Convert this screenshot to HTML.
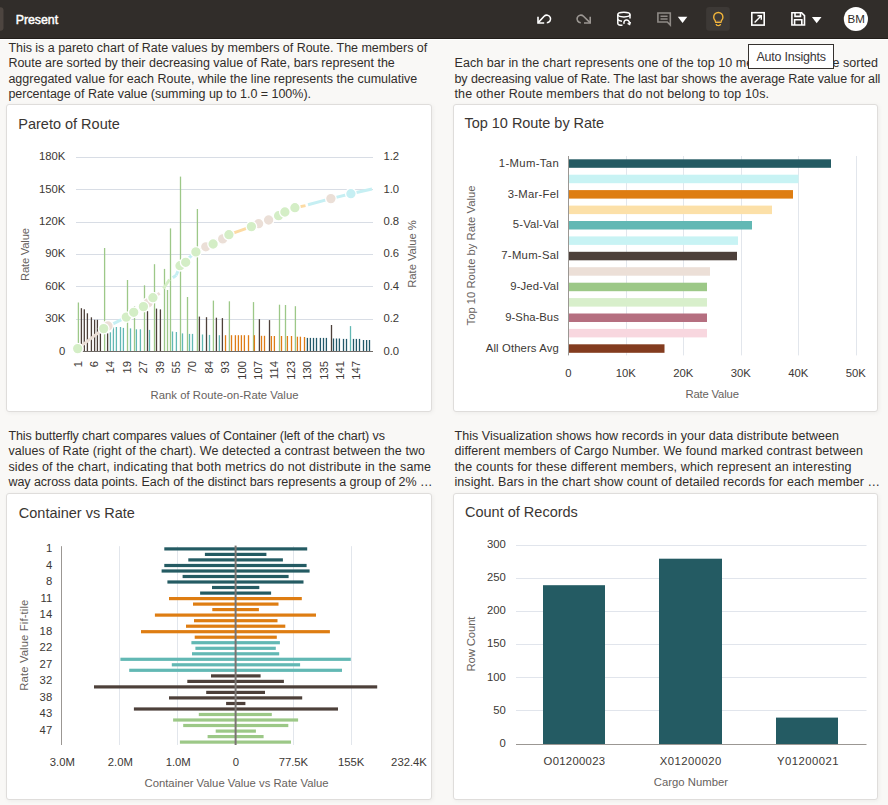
<!DOCTYPE html>
<html><head><meta charset="utf-8">
<style>
*{margin:0;padding:0;box-sizing:border-box}
html,body{width:888px;height:805px;overflow:hidden;background:#f9f8f6;font-family:"Liberation Sans", sans-serif;color:#312d2a}
#hdr{position:absolute;left:0;top:0;width:888px;height:39px;background:#312d2a;border-bottom:1px solid #221e1b}
#hl{position:absolute;left:0;top:39px;width:888px;height:1px;background:#fff}
#tab{position:absolute;left:-6px;top:6px;width:10px;height:26px;border-radius:4px;background:#4a4541}
.card{position:absolute;background:#fff;border:1px solid #dfdddb;border-radius:3px;box-shadow:1px 1px 4px rgba(0,0,0,0.05)}
svg{position:absolute;left:0;top:0}
svg text{font-family:"Liberation Sans", sans-serif}
#tip{position:absolute;left:748px;top:44px;width:86px;height:25px;background:#fff;border:1px solid #36322f}
</style></head><body>
<div id="hdr"></div><div id="hl"></div>
<svg width="888" height="805" viewBox="0 0 888 805"><text x="8.4" y="51.9" font-size="12.5" fill="#312d2a" text-anchor="start" textLength="418.8" lengthAdjust="spacing" >This is a pareto chart of Rate values by members of Route. The members of</text><text x="8.4" y="67.35" font-size="12.5" fill="#312d2a" text-anchor="start" textLength="386.4" lengthAdjust="spacing" >Route are sorted by their decreasing value of Rate, bars represent the</text><text x="8.4" y="82.8" font-size="12.5" fill="#312d2a" text-anchor="start" textLength="408.9" lengthAdjust="spacing" >aggregated value for each Route, while the line represents the cumulative</text><text x="8.4" y="98.25" font-size="12.5" fill="#312d2a" text-anchor="start" textLength="302.6" lengthAdjust="spacing" >percentage of Rate value (summing up to 1.0 = 100%).</text><text x="454.5" y="67.35" font-size="12.5" fill="#312d2a" text-anchor="start" textLength="423.4" lengthAdjust="spacing" >Each bar in the chart represents one of the top 10 members of Route sorted</text><text x="454.5" y="82.8" font-size="12.5" fill="#312d2a" text-anchor="start" textLength="425.9" lengthAdjust="spacing" >by decreasing value of Rate. The last bar shows the average Rate value for all</text><text x="454.5" y="98.25" font-size="12.5" fill="#312d2a" text-anchor="start" textLength="314.5" lengthAdjust="spacing" >the other Route members that do not belong to top 10s.</text><text x="8.4" y="439.7" font-size="12.5" fill="#312d2a" text-anchor="start" textLength="376.6" lengthAdjust="spacing" >This butterfly chart compares values of Container (left of the chart) vs</text><text x="8.4" y="455.15" font-size="12.5" fill="#312d2a" text-anchor="start" textLength="416.6" lengthAdjust="spacing" >values of Rate (right of the chart). We detected a contrast between the two</text><text x="8.4" y="470.6" font-size="12.5" fill="#312d2a" text-anchor="start" textLength="422.6" lengthAdjust="spacing" >sides of the chart, indicating that both metrics do not distribute in the same</text><text x="8.4" y="486.05" font-size="12.5" fill="#312d2a" text-anchor="start" textLength="424.1" lengthAdjust="spacing" >way across data points. Each of the distinct bars represents a group of 2% …</text><text x="454.5" y="439.7" font-size="12.5" fill="#312d2a" text-anchor="start" textLength="384.5" lengthAdjust="spacing" >This Visualization shows how records in your data distribute between</text><text x="454.5" y="455.15" font-size="12.5" fill="#312d2a" text-anchor="start" textLength="408.5" lengthAdjust="spacing" >different members of Cargo Number. We found marked contrast between</text><text x="454.5" y="470.6" font-size="12.5" fill="#312d2a" text-anchor="start" textLength="397.0" lengthAdjust="spacing" >the counts for these different members, which represent an interesting</text><text x="454.5" y="486.05" font-size="12.5" fill="#312d2a" text-anchor="start" textLength="425.5" lengthAdjust="spacing" >insight. Bars in the chart show count of detailed records for each member …</text></svg>
<div class="card" style="left:6px;top:104px;width:426px;height:308px"></div>
<div class="card" style="left:453px;top:104px;width:425px;height:308px"></div>
<div class="card" style="left:6px;top:493px;width:426px;height:307px"></div>
<div class="card" style="left:453px;top:493px;width:425px;height:307px"></div>
<svg width="888" height="805" viewBox="0 0 888 805"><text x="18.3" y="129" font-size="14.5" fill="#3a3633" text-anchor="start" textLength="101.5" lengthAdjust="spacing" >Pareto of Route</text><text x="464.6" y="127.9" font-size="14.5" fill="#3a3633" text-anchor="start" textLength="139.5" lengthAdjust="spacing" >Top 10 Route by Rate</text><text x="18.8" y="518" font-size="14.5" fill="#3a3633" text-anchor="start" >Container vs Rate</text><text x="465" y="517" font-size="14.5" fill="#3a3633" text-anchor="start" >Count of Records</text><text x="65.4" y="354.5" font-size="11.3" fill="#3c3835" text-anchor="end" >0</text><line x1="76" y1="319.5" x2="373" y2="319.5" stroke="#d8dde5" stroke-width="1"/><text x="65.4" y="322.1" font-size="11.3" fill="#3c3835" text-anchor="end" >30K</text><line x1="76" y1="286.5" x2="373" y2="286.5" stroke="#d8dde5" stroke-width="1"/><text x="65.4" y="289.7" font-size="11.3" fill="#3c3835" text-anchor="end" >60K</text><line x1="76" y1="254.5" x2="373" y2="254.5" stroke="#d8dde5" stroke-width="1"/><text x="65.4" y="257.3" font-size="11.3" fill="#3c3835" text-anchor="end" >90K</text><line x1="76" y1="222.5" x2="373" y2="222.5" stroke="#d8dde5" stroke-width="1"/><text x="65.4" y="224.90000000000003" font-size="11.3" fill="#3c3835" text-anchor="end" >120K</text><line x1="76" y1="189.5" x2="373" y2="189.5" stroke="#d8dde5" stroke-width="1"/><text x="65.4" y="192.50000000000003" font-size="11.3" fill="#3c3835" text-anchor="end" >150K</text><line x1="76" y1="157.5" x2="373" y2="157.5" stroke="#d8dde5" stroke-width="1"/><text x="65.4" y="160.10000000000005" font-size="11.3" fill="#3c3835" text-anchor="end" >180K</text><text x="383.4" y="354.5" font-size="11.3" fill="#3c3835" text-anchor="start" >0.0</text><text x="383.4" y="322.1" font-size="11.3" fill="#3c3835" text-anchor="start" >0.2</text><text x="383.4" y="289.7" font-size="11.3" fill="#3c3835" text-anchor="start" >0.4</text><text x="383.4" y="257.3" font-size="11.3" fill="#3c3835" text-anchor="start" >0.6</text><text x="383.4" y="224.90000000000003" font-size="11.3" fill="#3c3835" text-anchor="start" >0.8</text><text x="383.4" y="192.50000000000003" font-size="11.3" fill="#3c3835" text-anchor="start" >1.0</text><text x="383.4" y="160.10000000000005" font-size="11.3" fill="#3c3835" text-anchor="start" >1.2</text><rect x="77.75" y="302.5" width="1.3" height="48.8" fill="#9dc888"/><rect x="80.75" y="308.2" width="1.3" height="43.1" fill="#4d403a"/><rect x="83.65" y="309.3" width="1.3" height="42.0" fill="#4d403a"/><rect x="86.75" y="313.3" width="1.3" height="38.0" fill="#4d403a"/><rect x="90.75" y="317.3" width="1.3" height="34.0" fill="#4d403a"/><rect x="93.95" y="319.8" width="1.3" height="31.5" fill="#4d403a"/><rect x="96.75" y="319.8" width="1.3" height="31.5" fill="#4d403a"/><rect x="99.75" y="333.4" width="1.3" height="17.9" fill="#4d403a"/><rect x="103.95" y="248.0" width="1.3" height="103.3" fill="#9dc888"/><rect x="106.95" y="333.4" width="1.3" height="17.9" fill="#4d403a"/><rect x="109.75" y="332.3" width="1.3" height="19.0" fill="#62b8b4"/><rect x="112.75" y="327.0" width="1.3" height="24.3" fill="#62b8b4"/><rect x="115.75" y="327.0" width="1.3" height="24.3" fill="#62b8b4"/><rect x="119.85" y="327.0" width="1.3" height="24.3" fill="#62b8b4"/><rect x="122.75" y="327.9" width="1.3" height="23.4" fill="#62b8b4"/><rect x="126.85" y="280.0" width="1.3" height="71.3" fill="#9dc888"/><rect x="129.85" y="328.4" width="1.3" height="22.9" fill="#62b8b4"/><rect x="133.85" y="306.0" width="1.3" height="45.3" fill="#9dc888"/><rect x="135.75" y="329.3" width="1.3" height="22.0" fill="#62b8b4"/><rect x="139.75" y="329.3" width="1.3" height="22.0" fill="#62b8b4"/><rect x="143.85" y="285.3" width="1.3" height="66.0" fill="#9dc888"/><rect x="146.85" y="311.2" width="1.3" height="40.1" fill="#4d403a"/><rect x="148.85" y="329.9" width="1.3" height="21.4" fill="#62b8b4"/><rect x="153.85" y="264.2" width="1.3" height="87.1" fill="#9dc888"/><rect x="155.85" y="308.6" width="1.3" height="42.7" fill="#4d403a"/><rect x="159.75" y="309.4" width="1.3" height="41.9" fill="#4d403a"/><rect x="163.85" y="268.9" width="1.3" height="82.4" fill="#9dc888"/><rect x="166.85" y="290.0" width="1.3" height="61.3" fill="#9dc888"/><rect x="169.85" y="228.4" width="1.3" height="122.9" fill="#9dc888"/><rect x="171.85" y="331.5" width="1.3" height="19.8" fill="#62b8b4"/><rect x="175.75" y="332.0" width="1.3" height="19.3" fill="#62b8b4"/><rect x="179.85" y="176.6" width="1.3" height="174.7" fill="#9dc888"/><rect x="181.85" y="333.4" width="1.3" height="17.9" fill="#62b8b4"/><rect x="186.85" y="297.0" width="1.3" height="54.3" fill="#9dc888"/><rect x="188.85" y="333.9" width="1.3" height="17.4" fill="#62b8b4"/><rect x="191.85" y="333.9" width="1.3" height="17.4" fill="#62b8b4"/><rect x="196.75" y="209.0" width="1.3" height="142.3" fill="#9dc888"/><rect x="198.75" y="316.6" width="1.3" height="34.7" fill="#4d403a"/><rect x="201.85" y="334.5" width="1.3" height="16.8" fill="#62b8b4"/><rect x="205.85" y="317.2" width="1.3" height="34.1" fill="#4d403a"/><rect x="208.85" y="334.9" width="1.3" height="16.4" fill="#62b8b4"/><rect x="212.75" y="300.6" width="1.3" height="50.7" fill="#9dc888"/><rect x="215.75" y="317.7" width="1.3" height="33.6" fill="#4d403a"/><rect x="218.75" y="335.2" width="1.3" height="16.1" fill="#62b8b4"/><rect x="221.75" y="318.1" width="1.3" height="33.2" fill="#4d403a"/><rect x="224.85" y="335.2" width="1.3" height="16.1" fill="#df7c16"/><rect x="228.75" y="301.3" width="1.3" height="50.0" fill="#9dc888"/><rect x="230.85" y="335.2" width="1.3" height="16.1" fill="#df7c16"/><rect x="234.75" y="335.2" width="1.3" height="16.1" fill="#df7c16"/><rect x="237.75" y="335.2" width="1.3" height="16.1" fill="#df7c16"/><rect x="240.75" y="335.2" width="1.3" height="16.1" fill="#df7c16"/><rect x="243.75" y="335.2" width="1.3" height="16.1" fill="#df7c16"/><rect x="247.85" y="335.2" width="1.3" height="16.1" fill="#df7c16"/><rect x="252.85" y="302.1" width="1.3" height="49.2" fill="#9dc888"/><rect x="253.75" y="335.2" width="1.3" height="16.1" fill="#df7c16"/><rect x="258.75" y="319.2" width="1.3" height="32.1" fill="#4d403a"/><rect x="260.85" y="335.8" width="1.3" height="15.5" fill="#df7c16"/><rect x="263.85" y="335.8" width="1.3" height="15.5" fill="#df7c16"/><rect x="268.85" y="320.1" width="1.3" height="31.2" fill="#4d403a"/><rect x="270.75" y="336.0" width="1.3" height="15.3" fill="#df7c16"/><rect x="273.75" y="336.0" width="1.3" height="15.3" fill="#df7c16"/><rect x="278.85" y="304.7" width="1.3" height="46.6" fill="#9dc888"/><rect x="280.85" y="336.0" width="1.3" height="15.3" fill="#df7c16"/><rect x="284.85" y="305.0" width="1.3" height="46.3" fill="#9dc888"/><rect x="286.75" y="336.0" width="1.3" height="15.3" fill="#df7c16"/><rect x="290.85" y="336.0" width="1.3" height="15.3" fill="#df7c16"/><rect x="294.75" y="306.2" width="1.3" height="45.1" fill="#9dc888"/><rect x="296.75" y="336.7" width="1.3" height="14.6" fill="#df7c16"/><rect x="299.75" y="336.7" width="1.3" height="14.6" fill="#df7c16"/><rect x="303.85" y="337.0" width="1.3" height="14.3" fill="#df7c16"/><rect x="306.75" y="337.9" width="1.3" height="13.4" fill="#23596a"/><rect x="309.75" y="337.9" width="1.3" height="13.4" fill="#23596a"/><rect x="312.85" y="337.9" width="1.3" height="13.4" fill="#23596a"/><rect x="315.85" y="337.9" width="1.3" height="13.4" fill="#23596a"/><rect x="319.75" y="337.9" width="1.3" height="13.4" fill="#23596a"/><rect x="322.85" y="337.9" width="1.3" height="13.4" fill="#23596a"/><rect x="325.75" y="337.9" width="1.3" height="13.4" fill="#23596a"/><rect x="330.85" y="325.0" width="1.3" height="26.3" fill="#4d403a"/><rect x="332.85" y="338.5" width="1.3" height="12.8" fill="#23596a"/><rect x="335.85" y="338.5" width="1.3" height="12.8" fill="#23596a"/><rect x="338.75" y="338.5" width="1.3" height="12.8" fill="#23596a"/><rect x="342.85" y="338.9" width="1.3" height="12.4" fill="#23596a"/><rect x="345.85" y="338.9" width="1.3" height="12.4" fill="#23596a"/><rect x="349.85" y="326.1" width="1.3" height="25.2" fill="#62b8b4"/><rect x="352.85" y="338.9" width="1.3" height="12.4" fill="#23596a"/><rect x="355.75" y="338.9" width="1.3" height="12.4" fill="#23596a"/><rect x="358.85" y="338.9" width="1.3" height="12.4" fill="#23596a"/><rect x="362.85" y="340.0" width="1.3" height="11.3" fill="#23596a"/><rect x="365.95" y="340.0" width="1.3" height="11.3" fill="#23596a"/><rect x="368.85" y="340.0" width="1.3" height="11.3" fill="#23596a"/><line x1="76" y1="351.5" x2="373" y2="351.5" stroke="#6f6a66" stroke-width="1.1"/><line x1="77.7" y1="348.6" x2="103.7" y2="328.6" stroke="#ebdfd7" stroke-width="3"/><line x1="103.7" y1="328.6" x2="126.3" y2="317.1" stroke="#c6eff3" stroke-width="3"/><line x1="126.3" y1="317.1" x2="143.4" y2="306.6" stroke="#c6eff3" stroke-width="3"/><line x1="143.4" y1="306.6" x2="152.9" y2="297.7" stroke="#ebdfd7" stroke-width="3"/><line x1="152.9" y1="297.7" x2="159.6" y2="293.2" stroke="#ebdfd7" stroke-width="3"/><line x1="163.5" y1="288.5" x2="169.5" y2="279.5" stroke="#d4eec6" stroke-width="3"/><line x1="172.8" y1="277.8" x2="176.2" y2="275.3" stroke="#c6eff3" stroke-width="3"/><line x1="176.2" y1="275.3" x2="180" y2="265.7" stroke="#c6eff3" stroke-width="3"/><line x1="180" y1="265.7" x2="195.9" y2="251.9" stroke="#c6eff3" stroke-width="3"/><line x1="195.9" y1="251.9" x2="228.9" y2="234.7" stroke="#ebdfd7" stroke-width="3"/><line x1="228.9" y1="234.7" x2="251.4" y2="226.6" stroke="#fcdba4" stroke-width="3"/><line x1="251.4" y1="226.6" x2="268.6" y2="220" stroke="#ebdfd7" stroke-width="3"/><line x1="268.6" y1="220" x2="294.9" y2="207.7" stroke="#d4eec6" stroke-width="3"/><line x1="294.9" y1="207.7" x2="305.5" y2="205.6" stroke="#fcdba4" stroke-width="3"/><line x1="308" y1="204.8" x2="330.9" y2="198.6" stroke="#c6eff3" stroke-width="3"/><line x1="330.9" y1="198.6" x2="350.9" y2="193.7" stroke="#c6eff3" stroke-width="3"/><line x1="350.9" y1="193.7" x2="372" y2="189" stroke="#c6eff3" stroke-width="3"/><circle cx="108" cy="326" r="5.3" fill="#ebdfd7" stroke="#fff" stroke-width="1.3"/><circle cx="148" cy="303" r="5.3" fill="#ebdfd7" stroke="#fff" stroke-width="1.3"/><circle cx="205.8" cy="246.8" r="5.3" fill="#ebdfd7" stroke="#fff" stroke-width="1.3"/><circle cx="222.7" cy="238.9" r="5.3" fill="#ebdfd7" stroke="#fff" stroke-width="1.3"/><circle cx="258.6" cy="223.7" r="5.3" fill="#ebdfd7" stroke="#fff" stroke-width="1.3"/><circle cx="268.6" cy="220" r="5.3" fill="#ebdfd7" stroke="#fff" stroke-width="1.3"/><circle cx="330.9" cy="198.6" r="5.3" fill="#ebdfd7" stroke="#fff" stroke-width="1.3"/><circle cx="77.7" cy="348.6" r="5.3" fill="#d4eec6" stroke="#fff" stroke-width="1.3"/><circle cx="103.7" cy="328.6" r="5.3" fill="#d4eec6" stroke="#fff" stroke-width="1.3"/><circle cx="126.3" cy="317.1" r="5.3" fill="#d4eec6" stroke="#fff" stroke-width="1.3"/><circle cx="133.7" cy="312.3" r="5.3" fill="#d4eec6" stroke="#fff" stroke-width="1.3"/><circle cx="143.4" cy="306.6" r="5.3" fill="#d4eec6" stroke="#fff" stroke-width="1.3"/><circle cx="152.9" cy="297.7" r="5.3" fill="#d4eec6" stroke="#fff" stroke-width="1.3"/><circle cx="180" cy="265.7" r="5.3" fill="#d4eec6" stroke="#fff" stroke-width="1.3"/><circle cx="185.7" cy="262.3" r="5.3" fill="#d4eec6" stroke="#fff" stroke-width="1.3"/><circle cx="195.9" cy="251.9" r="5.3" fill="#d4eec6" stroke="#fff" stroke-width="1.3"/><circle cx="213.1" cy="244" r="5.3" fill="#d4eec6" stroke="#fff" stroke-width="1.3"/><circle cx="228.9" cy="234.7" r="5.3" fill="#d4eec6" stroke="#fff" stroke-width="1.3"/><circle cx="251.4" cy="226.6" r="5.3" fill="#d4eec6" stroke="#fff" stroke-width="1.3"/><circle cx="278.6" cy="215.7" r="5.3" fill="#d4eec6" stroke="#fff" stroke-width="1.3"/><circle cx="284.9" cy="212" r="5.3" fill="#d4eec6" stroke="#fff" stroke-width="1.3"/><circle cx="294.9" cy="207.7" r="5.3" fill="#d4eec6" stroke="#fff" stroke-width="1.3"/><circle cx="350.9" cy="193.7" r="5.3" fill="#c6eff3" stroke="#fff" stroke-width="1.3"/><text transform="translate(81.5,361) rotate(-90)" x="0" y="0" font-size="11.3" fill="#3c3835" text-anchor="end">1</text><text transform="translate(97.9,361) rotate(-90)" x="0" y="0" font-size="11.3" fill="#3c3835" text-anchor="end">6</text><text transform="translate(114.3,361) rotate(-90)" x="0" y="0" font-size="11.3" fill="#3c3835" text-anchor="end">14</text><text transform="translate(130.7,361) rotate(-90)" x="0" y="0" font-size="11.3" fill="#3c3835" text-anchor="end">19</text><text transform="translate(147.1,361) rotate(-90)" x="0" y="0" font-size="11.3" fill="#3c3835" text-anchor="end">27</text><text transform="translate(163.5,361) rotate(-90)" x="0" y="0" font-size="11.3" fill="#3c3835" text-anchor="end">39</text><text transform="translate(179.9,361) rotate(-90)" x="0" y="0" font-size="11.3" fill="#3c3835" text-anchor="end">55</text><text transform="translate(196.3,361) rotate(-90)" x="0" y="0" font-size="11.3" fill="#3c3835" text-anchor="end">70</text><text transform="translate(212.7,361) rotate(-90)" x="0" y="0" font-size="11.3" fill="#3c3835" text-anchor="end">84</text><text transform="translate(229.1,361) rotate(-90)" x="0" y="0" font-size="11.3" fill="#3c3835" text-anchor="end">93</text><text transform="translate(245.5,361) rotate(-90)" x="0" y="0" font-size="11.3" fill="#3c3835" text-anchor="end">100</text><text transform="translate(261.9,361) rotate(-90)" x="0" y="0" font-size="11.3" fill="#3c3835" text-anchor="end">107</text><text transform="translate(278.3,361) rotate(-90)" x="0" y="0" font-size="11.3" fill="#3c3835" text-anchor="end">114</text><text transform="translate(294.7,361) rotate(-90)" x="0" y="0" font-size="11.3" fill="#3c3835" text-anchor="end">123</text><text transform="translate(311.1,361) rotate(-90)" x="0" y="0" font-size="11.3" fill="#3c3835" text-anchor="end">130</text><text transform="translate(327.5,361) rotate(-90)" x="0" y="0" font-size="11.3" fill="#3c3835" text-anchor="end">135</text><text transform="translate(343.9,361) rotate(-90)" x="0" y="0" font-size="11.3" fill="#3c3835" text-anchor="end">141</text><text transform="translate(360.3,361) rotate(-90)" x="0" y="0" font-size="11.3" fill="#3c3835" text-anchor="end">147</text><text x="224.5" y="399" font-size="11.3" fill="#67625e" text-anchor="middle" textLength="148" lengthAdjust="spacing" >Rank of Route-on-Rate Value</text><text transform="translate(28.6,254.5) rotate(-90)" x="0" y="0" font-size="11.3" fill="#67625e" text-anchor="middle" textLength="53" lengthAdjust="spacing">Rate Value</text><text transform="translate(415.5,254) rotate(-90)" x="0" y="0" font-size="11.3" fill="#67625e" text-anchor="middle" textLength="67.5" lengthAdjust="spacing">Rate Value %</text><line x1="626.5" y1="156" x2="626.5" y2="355.4" stroke="#e2e6ec" stroke-width="1"/><line x1="683.5" y1="156" x2="683.5" y2="355.4" stroke="#e2e6ec" stroke-width="1"/><line x1="741.5" y1="156" x2="741.5" y2="355.4" stroke="#e2e6ec" stroke-width="1"/><line x1="798.5" y1="156" x2="798.5" y2="355.4" stroke="#e2e6ec" stroke-width="1"/><line x1="856.5" y1="156" x2="856.5" y2="355.4" stroke="#e2e6ec" stroke-width="1"/><text x="568.4" y="377" font-size="11.3" fill="#3c3835" text-anchor="middle" >0</text><text x="625.86" y="377" font-size="11.3" fill="#3c3835" text-anchor="middle" >10K</text><text x="683.3199999999999" y="377" font-size="11.3" fill="#3c3835" text-anchor="middle" >20K</text><text x="740.78" y="377" font-size="11.3" fill="#3c3835" text-anchor="middle" >30K</text><text x="798.24" y="377" font-size="11.3" fill="#3c3835" text-anchor="middle" >40K</text><text x="855.7" y="377" font-size="11.3" fill="#3c3835" text-anchor="middle" >50K</text><rect x="568.4" y="159.3" width="262.6" height="8.5" fill="#245b63"/><rect x="568.4" y="174.7" width="230.1" height="8.5" fill="#c8f3f4"/><rect x="568.4" y="190.1" width="224.6" height="8.5" fill="#de7d12"/><rect x="568.4" y="205.6" width="203.6" height="8.5" fill="#fce0a8"/><rect x="568.4" y="221.0" width="183.6" height="8.5" fill="#62b8b4"/><rect x="568.4" y="236.4" width="169.6" height="8.5" fill="#c8f3f4"/><rect x="568.4" y="251.8" width="168.6" height="8.5" fill="#4d403a"/><rect x="568.4" y="267.2" width="141.6" height="8.5" fill="#ecdfd7"/><rect x="568.4" y="282.7" width="138.6" height="8.5" fill="#9cc887"/><rect x="568.4" y="298.1" width="138.6" height="8.5" fill="#d8efcb"/><rect x="568.4" y="313.5" width="138.6" height="8.5" fill="#b56f80"/><rect x="568.4" y="328.9" width="138.6" height="8.5" fill="#f8d7df"/><rect x="568.4" y="344.3" width="96.1" height="8.5" fill="#833c1f"/><line x1="568.5" y1="156" x2="568.5" y2="355.4" stroke="#9b9793" stroke-width="1"/><text x="558.8" y="166.75" font-size="11.3" fill="#3c3835" text-anchor="end" textLength="60" lengthAdjust="spacing" >1-Mum-Tan</text><text x="558.8" y="197.59" font-size="11.3" fill="#3c3835" text-anchor="end" textLength="51" lengthAdjust="spacing" >3-Mar-Fel</text><text x="558.8" y="228.43" font-size="11.3" fill="#3c3835" text-anchor="end" textLength="46" lengthAdjust="spacing" >5-Val-Val</text><text x="558.8" y="259.27" font-size="11.3" fill="#3c3835" text-anchor="end" textLength="57.5" lengthAdjust="spacing" >7-Mum-Sal</text><text x="558.8" y="290.11" font-size="11.3" fill="#3c3835" text-anchor="end" textLength="48.5" lengthAdjust="spacing" >9-Jed-Val</text><text x="558.8" y="320.95" font-size="11.3" fill="#3c3835" text-anchor="end" textLength="53.5" lengthAdjust="spacing" >9-Sha-Bus</text><text x="558.8" y="351.79" font-size="11.3" fill="#3c3835" text-anchor="end" textLength="73" lengthAdjust="spacing" >All Others Avg</text><text x="712.2" y="397.5" font-size="11.3" fill="#67625e" text-anchor="middle" textLength="53.5" lengthAdjust="spacing" >Rate Value</text><text transform="translate(474.7,255.5) rotate(-90)" x="0" y="0" font-size="11.3" fill="#67625e" text-anchor="middle" textLength="140" lengthAdjust="spacing">Top 10 Route by Rate Value</text><line x1="119.5" y1="546.2" x2="119.5" y2="745" stroke="#e2e6ec" stroke-width="1"/><line x1="177.5" y1="546.2" x2="177.5" y2="745" stroke="#e2e6ec" stroke-width="1"/><line x1="293.5" y1="546.2" x2="293.5" y2="745" stroke="#e2e6ec" stroke-width="1"/><line x1="351.5" y1="546.2" x2="351.5" y2="745" stroke="#e2e6ec" stroke-width="1"/><line x1="61.5" y1="546.2" x2="61.5" y2="745" stroke="#9b9793" stroke-width="1"/><rect x="164.3" y="547.3" width="142.9" height="3.2" fill="#245b63"/><rect x="204.9" y="552.8" width="61.5" height="3.2" fill="#245b63"/><rect x="188.3" y="558.3" width="94.6" height="3.2" fill="#245b63"/><rect x="164.3" y="563.9" width="142.3" height="3.2" fill="#245b63"/><rect x="161.6" y="569.4" width="148.0" height="3.2" fill="#245b63"/><rect x="182.6" y="574.9" width="106.0" height="3.2" fill="#245b63"/><rect x="167.4" y="580.4" width="136.1" height="3.2" fill="#245b63"/><rect x="212.0" y="585.9" width="47.3" height="3.2" fill="#245b63"/><rect x="200.1" y="591.5" width="71.0" height="3.2" fill="#245b63"/><rect x="169.0" y="597.0" width="132.8" height="3.2" fill="#de7d12"/><rect x="193.0" y="602.5" width="85.5" height="3.2" fill="#de7d12"/><rect x="212.3" y="608.0" width="46.6" height="3.2" fill="#de7d12"/><rect x="154.9" y="613.5" width="161.1" height="3.2" fill="#de7d12"/><rect x="194.0" y="619.1" width="83.5" height="3.2" fill="#de7d12"/><rect x="186.0" y="624.6" width="99.3" height="3.2" fill="#de7d12"/><rect x="141.0" y="630.1" width="188.9" height="3.2" fill="#de7d12"/><rect x="194.7" y="635.6" width="82.1" height="3.2" fill="#de7d12"/><rect x="191.4" y="641.1" width="88.5" height="3.2" fill="#62b8b4"/><rect x="195.4" y="646.7" width="80.4" height="3.2" fill="#62b8b4"/><rect x="192.0" y="652.2" width="87.2" height="3.2" fill="#62b8b4"/><rect x="120.4" y="657.7" width="230.4" height="3.2" fill="#62b8b4"/><rect x="171.8" y="663.2" width="128.3" height="3.2" fill="#62b8b4"/><rect x="129.2" y="668.7" width="212.8" height="3.2" fill="#62b8b4"/><rect x="211.0" y="674.3" width="49.6" height="3.2" fill="#4d403a"/><rect x="187.3" y="679.8" width="96.6" height="3.2" fill="#4d403a"/><rect x="94.0" y="685.3" width="283.2" height="3.2" fill="#4d403a"/><rect x="206.2" y="690.8" width="58.8" height="3.2" fill="#4d403a"/><rect x="169.0" y="696.3" width="133.2" height="3.2" fill="#4d403a"/><rect x="226.1" y="701.9" width="19.3" height="3.2" fill="#4d403a"/><rect x="133.9" y="707.4" width="204.1" height="3.2" fill="#4d403a"/><rect x="198.8" y="712.9" width="73.0" height="3.2" fill="#9cc887"/><rect x="173.1" y="718.4" width="125.0" height="3.2" fill="#9cc887"/><rect x="183.2" y="723.9" width="105.1" height="3.2" fill="#9cc887"/><rect x="215.7" y="729.5" width="40.2" height="3.2" fill="#9cc887"/><rect x="207.6" y="735.0" width="56.0" height="3.2" fill="#9cc887"/><rect x="179.9" y="740.5" width="111.1" height="3.2" fill="#9cc887"/><line x1="235.6" y1="545.6" x2="235.6" y2="745" stroke="#7a7572" stroke-width="2"/><text x="52.2" y="552.0" font-size="11.3" fill="#3c3835" text-anchor="end" >1</text><text x="52.2" y="568.5" font-size="11.3" fill="#3c3835" text-anchor="end" >4</text><text x="52.2" y="585.0" font-size="11.3" fill="#3c3835" text-anchor="end" >8</text><text x="52.2" y="601.5" font-size="11.3" fill="#3c3835" text-anchor="end" >11</text><text x="52.2" y="618.0" font-size="11.3" fill="#3c3835" text-anchor="end" >14</text><text x="52.2" y="634.5" font-size="11.3" fill="#3c3835" text-anchor="end" >18</text><text x="52.2" y="651.0" font-size="11.3" fill="#3c3835" text-anchor="end" >22</text><text x="52.2" y="667.5" font-size="11.3" fill="#3c3835" text-anchor="end" >27</text><text x="52.2" y="684.0" font-size="11.3" fill="#3c3835" text-anchor="end" >32</text><text x="52.2" y="700.5" font-size="11.3" fill="#3c3835" text-anchor="end" >38</text><text x="52.2" y="717.0" font-size="11.3" fill="#3c3835" text-anchor="end" >43</text><text x="52.2" y="733.5" font-size="11.3" fill="#3c3835" text-anchor="end" >47</text><text x="62.4" y="766" font-size="11.3" fill="#3c3835" text-anchor="middle" >3.0M</text><text x="120.3" y="766" font-size="11.3" fill="#3c3835" text-anchor="middle" >2.0M</text><text x="178.2" y="766" font-size="11.3" fill="#3c3835" text-anchor="middle" >1.0M</text><text x="236" y="766" font-size="11.3" fill="#3c3835" text-anchor="middle" >0</text><text x="293.4" y="766" font-size="11.3" fill="#3c3835" text-anchor="middle" >77.5K</text><text x="351.1" y="766" font-size="11.3" fill="#3c3835" text-anchor="middle" >155K</text><text x="409" y="766" font-size="11.3" fill="#3c3835" text-anchor="middle" >232.4K</text><text x="236.5" y="786.6" font-size="11.3" fill="#67625e" text-anchor="middle" >Container Value Value vs Rate Value</text><text transform="translate(28.1,645.2) rotate(-90)" x="0" y="0" font-size="11.3" fill="#67625e" text-anchor="middle" textLength="91" lengthAdjust="spacing">Rate Value Fif-tile</text><line x1="516" y1="710.5" x2="866.5" y2="710.5" stroke="#e1e5ec" stroke-width="1"/><line x1="516" y1="677.5" x2="866.5" y2="677.5" stroke="#e1e5ec" stroke-width="1"/><line x1="516" y1="644.5" x2="866.5" y2="644.5" stroke="#e1e5ec" stroke-width="1"/><line x1="516" y1="611.5" x2="866.5" y2="611.5" stroke="#e1e5ec" stroke-width="1"/><line x1="516" y1="578.5" x2="866.5" y2="578.5" stroke="#e1e5ec" stroke-width="1"/><line x1="516" y1="545.5" x2="866.5" y2="545.5" stroke="#e1e5ec" stroke-width="1"/><text x="505.8" y="746.7" font-size="11.3" fill="#3c3835" text-anchor="end" >0</text><text x="505.8" y="713.6" font-size="11.3" fill="#3c3835" text-anchor="end" >50</text><text x="505.8" y="680.5" font-size="11.3" fill="#3c3835" text-anchor="end" >100</text><text x="505.8" y="647.4" font-size="11.3" fill="#3c3835" text-anchor="end" >150</text><text x="505.8" y="614.3000000000001" font-size="11.3" fill="#3c3835" text-anchor="end" >200</text><text x="505.8" y="581.2" font-size="11.3" fill="#3c3835" text-anchor="end" >250</text><text x="505.8" y="548.1" font-size="11.3" fill="#3c3835" text-anchor="end" >300</text><rect x="543" y="585.2" width="62" height="158.9" fill="#245b63"/><rect x="659" y="558.7" width="63" height="185.4" fill="#245b63"/><rect x="776" y="717.6" width="62" height="26.5" fill="#245b63"/><line x1="516" y1="744.5" x2="866.5" y2="744.5" stroke="#9b9793" stroke-width="1"/><text x="574.3" y="765.3" font-size="11.3" fill="#3c3835" text-anchor="middle" textLength="61.5" lengthAdjust="spacing" >O01200023</text><text x="690.6" y="765.3" font-size="11.3" fill="#3c3835" text-anchor="middle" textLength="61.5" lengthAdjust="spacing" >X01200020</text><text x="807.8" y="765.3" font-size="11.3" fill="#3c3835" text-anchor="middle" textLength="61.5" lengthAdjust="spacing" >Y01200021</text><text x="690.9" y="786" font-size="11.3" fill="#67625e" text-anchor="middle" textLength="74.2" lengthAdjust="spacing" >Cargo Number</text><text transform="translate(474.9,644) rotate(-90)" x="0" y="0" font-size="11.3" fill="#67625e" text-anchor="middle" textLength="55" lengthAdjust="spacing">Row Count</text></svg>
<svg width="888" height="38" viewBox="0 0 888 38" style="position:absolute;left:0;top:0">
<rect x="-4" y="7.2" width="7.5" height="23.6" rx="3" fill="#4d4540"/>
<text x="15.8" y="23.9" font-size="12.4" fill="#ffffff" stroke="#ffffff" stroke-width="0.45" textLength="42.3" lengthAdjust="spacing" style="font-family:'Liberation Sans',sans-serif">Present</text>
<g fill="none" stroke="#ffffff" stroke-width="1.6" stroke-linecap="butt" stroke-linejoin="miter">
  <path d="M538,16.8 V23 H544.2"/>
  <path d="M538.2,22.6 L544.1,16.2 A3.8,3.8 0 1 1 546.8,22.7"/>
</g>
<g fill="none" stroke="#9c9793" stroke-width="1.6">
  <path d="M590.2,16.8 V23 H584"/>
  <path d="M590,22.6 L583.5,16.2 A3.8,3.8 0 1 0 580.8,22.7"/>
</g>
<g fill="none" stroke="#ffffff" stroke-width="1.5">
  <ellipse cx="623.9" cy="14.6" rx="6.1" ry="2.3"/>
  <path d="M617.8,14.6 V23.4 Q617.8,25.2 622.5,25.3"/>
  <path d="M630,14.6 V18.5"/>
  <path d="M617.8,19.6 Q619,21 622,21.2"/>
  <path d="M624.2,23.8 A2.7,2.7 0 1 1 629.3,23"/>
  <path d="M627.6,23.4 L629.6,24.4 L630.4,22"/>
</g>
<g fill="none" stroke="#8f8a86" stroke-width="1.6">
  <path d="M657.9,13 H670.3 V25 L667.3,22 H657.9 Z"/>
  <path d="M660.5,16.3 H667.6 M660.5,19 H667.6"/>
</g>
<path d="M677.8,16.8 H687.3 L682.55,23 Z" fill="#ffffff"/>
<rect x="706.1" y="7" width="23.7" height="23.8" rx="3" fill="#3d3936"/>
<g fill="none" stroke="#f2b53a" stroke-width="1.4">
  <path d="M715.7,22.4 L715.1,20.4 A4.6,4.6 0 1 1 721.5,20.4 L720.9,22.4 Z"/>
  <path d="M716.1,24 Q716.3,25.6 718.3,25.6 Q720.3,25.6 720.5,24"/>
</g>
<path d="M716.2,21.3 H720.4" stroke="#9a7a55" stroke-width="1"/>
<g fill="none" stroke="#ffffff" stroke-width="1.6">
  <rect x="751.8" y="12.7" width="12.4" height="12.4"/>
  <path d="M754.6,22.5 L761,16.1 M757.4,15.8 H761.3 V19.7" stroke-width="1.4"/>
</g>
<g fill="none" stroke="#ffffff" stroke-width="1.6">
  <path d="M791.9,12.7 H801.6 L804.5,15.6 V25 H791.9 Z"/>
  <path d="M795,12.7 V16.4 H800.5 V12.7"/>
  <path d="M794.6,25 V19.8 H801.8 V25"/>
</g>
<path d="M811.9,17 H821.5 L816.7,23.2 Z" fill="#ffffff"/>
<circle cx="855.9" cy="19" r="12.1" fill="#ffffff"/>
<text x="856.3" y="23.3" font-size="11.3" fill="#312d2a" text-anchor="middle" textLength="17.4" lengthAdjust="spacingAndGlyphs" style="font-family:'Liberation Sans',sans-serif">BM</text>
</svg>

<div id="tip"></div>
<svg width="888" height="805" viewBox="0 0 888 805" style="pointer-events:none"><text x="756.5" y="61" font-size="12.5" fill="#3a3638" text-anchor="start" textLength="69.5" lengthAdjust="spacing" >Auto Insights</text></svg>
</body></html>
